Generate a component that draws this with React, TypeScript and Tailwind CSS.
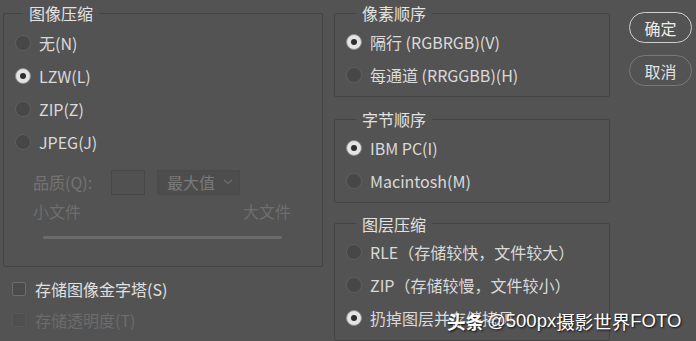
const font = "font-['Noto_Sans_CJK_SC','Noto_Sans',sans-serif]";

function Radio({ checked }: { checked?: boolean }) {
  if (checked) {
    return (
      <span className="flex h-4 w-4 shrink-0 items-center justify-center rounded-full border border-[#8a8a8a] bg-[#e4e4e4]">
        <span className="h-[6px] w-[6px] rounded-full bg-[#2e2e2e]" />
      </span>
    );
  }
  return <span className="h-4 w-4 shrink-0 rounded-full border border-[#5e5e5e] bg-[#474747]" />;
}

function RadioRow({ label, checked, pl }: { label: string; checked?: boolean; pl: string }) {
  return (
    <div className={`flex h-[33px] items-center gap-2 ${pl}`}>
      <Radio checked={checked} />
      <span className="whitespace-nowrap text-[16px] leading-none text-[#dadada]">{label}</span>
    </div>
  );
}

function Group({
  title,
  legendMl,
  className,
  children,
}: {
  title: string;
  legendMl: string;
  className: string;
  children: React.ReactNode;
}) {
  return (
    <fieldset className={`border border-[#444444] rounded-[2px] ${className}`}>
      <legend className={`${legendMl} px-[6px] text-[16px] leading-[22px] text-[#e2e2e2]`}>{title}</legend>
      {children}
    </fieldset>
  );
}

export default function App() {
  return (
    <div className={`relative flex h-[341px] w-[696px] overflow-hidden bg-[#535353] ${font}`}>
      {/* left column */}
      <div className="ml-[3px] flex w-[320px] flex-col pt-[2px]">
        <Group title="图像压缩" legendMl="ml-[19px]" className="h-[265px]">
          <div className="flex flex-col pt-[2px]">
            <RadioRow label="无(N)" pl="pl-[11px]" />
            <RadioRow label="LZW(L)" checked pl="pl-[11px]" />
            <RadioRow label="ZIP(Z)" pl="pl-[11px]" />
            <RadioRow label="JPEG(J)" pl="pl-[11px]" />
          </div>
          <div className="mt-[11px] flex h-[26px] items-center pl-[29px] text-[16px] text-[#737373]">
            <span className="w-[78px]">品质(Q):</span>
            <span className="h-[25px] w-[34px] border border-[#474747] bg-[#515151]" />
            <span className="ml-[12px] flex h-[25px] w-[83px] items-center justify-between border border-[#4a4a4a] bg-[#4d4d4d] pl-[9px] pr-[6px] text-[#7a7a7a]">
              最大值
              <svg width="10" height="6" viewBox="0 0 10 6" fill="none">
                <path d="M1 1l4 3.5L9 1" stroke="#6e6e6e" strokeWidth="1.2" />
              </svg>
            </span>
          </div>
          <div className="mt-[6px] flex h-[20px] items-center justify-between pl-[29px] pr-[31px] text-[16px] text-[#6e6e6e]">
            <span>小文件</span>
            <span>大文件</span>
          </div>
          <div className="ml-[39px] mt-[15px] h-[3px] w-[239px] rounded-full bg-[#6b6b6b]" />
        </Group>
        <div className="mt-[11px] flex h-[22px] items-center gap-[9px] pl-[9px]">
          <span className="h-[14px] w-[14px] rounded-[2px] border border-[#6c6c6c] bg-[#4b4b4b]" />
          <span className="text-[16px] leading-none text-[#e0e0e0]">存储图像金字塔(S)</span>
        </div>
        <div className="mt-[9px] flex h-[22px] items-center gap-[9px] pl-[9px]">
          <span className="h-[14px] w-[14px] rounded-[2px] border border-[#585858] bg-[#4f4f4f]" />
          <span className="text-[16px] leading-none text-[#6c6c6c]">存储透明度(T)</span>
        </div>
      </div>

      {/* right column */}
      <div className="ml-[11px] flex w-[276px] flex-col pt-[2px]">
        <Group title="像素顺序" legendMl="ml-[21px]" className="h-[104px]">
          <div className="flex flex-col pt-[1px]">
            <RadioRow label="隔行 (RGBRGB)(V)" checked pl="pl-[11px]" />
            <RadioRow label="每通道 (RRGGBB)(H)" pl="pl-[11px]" />
          </div>
        </Group>
        <Group title="字节顺序" legendMl="ml-[21px]" className="mt-[11px] h-[103px]">
          <div className="flex flex-col pt-[1px]">
            <RadioRow label="IBM PC(I)" checked pl="pl-[11px]" />
            <RadioRow label="Macintosh(M)" pl="pl-[11px]" />
          </div>
        </Group>
        <Group title="图层压缩" legendMl="ml-[21px]" className="mt-[10px] h-[140px]">
          <div className="flex flex-col pt-[1px]">
            <RadioRow label="RLE（存储较快，文件较大）" pl="pl-[11px]" />
            <RadioRow label="ZIP（存储较慢，文件较小）" pl="pl-[11px]" />
            <RadioRow label="扔掉图层并存储拷贝" checked pl="pl-[11px]" />
          </div>
        </Group>
      </div>

      {/* buttons */}
      <div className="ml-[19px] flex flex-col gap-[12px] pt-[12px]">
        <button className="h-[31px] w-[63px] rounded-full border-[1.5px] border-[#cfcfcf] text-[16px] leading-none text-[#ececec]">
          确定
        </button>
        <button className="h-[31px] w-[63px] rounded-full border-[1.5px] border-[#787878] text-[16px] leading-none text-[#e2e2e2]">
          取消
        </button>
      </div>

      {/* watermark */}
      <div className="absolute left-[447px] top-[308px] flex items-center whitespace-nowrap text-[18.5px] leading-[26px] text-white [text-shadow:1px_1px_2px_rgba(0,0,0,0.85)]">
        <span className="font-bold">头条</span>
        <span className="ml-[3px] font-['Liberation_Sans','Noto_Sans_CJK_SC',sans-serif]">@500px</span>
        <span>摄影世界</span>
        <span className="font-['Liberation_Sans',sans-serif]">FOTO</span>
      </div>
    </div>
  );
}
